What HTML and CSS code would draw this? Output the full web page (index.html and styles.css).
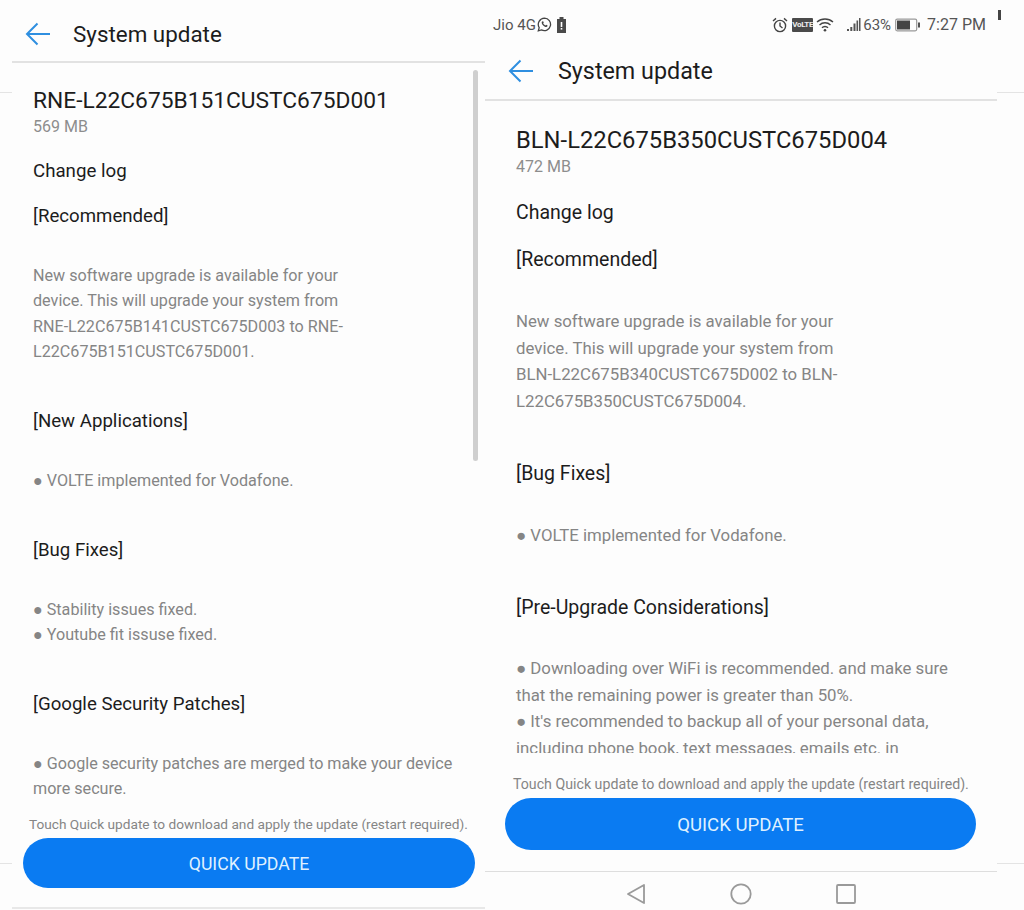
FILE: index.html
```html
<!DOCTYPE html>
<html lang="en">
<head>
<meta charset="utf-8">
<title>System update</title>
<link rel="stylesheet" href="styles.css">
</head>
<body>
<div class="page">
  <div class="gutter gutter-left"><div class="stub stub-a"></div><div class="stub stub-b"></div></div>

  <section class="phone phone-a">
    <header class="appbar">
      <svg class="back" width="26" height="24" viewBox="0 0 26 24"><path d="M25 12H2M12.5 1.5 2 12l10.500 10.500" fill="none" stroke="#2f8fe0" stroke-width="2"/></svg>
      <h1 class="apptitle">System update</h1>
    </header>
    <div class="body">
      <div class="scrollbar"></div>
      <h2 class="version">RNE-L22C675B151CUSTC675D001</h2>
      <div class="size">569 MB</div>
      <div class="changelog">Change log</div>
      <h3 class="head head-rec">[Recommended]</h3>
      <p class="text text-intro">New software upgrade is available for your<br>device. This will upgrade your system from<br>RNE-L22C675B141CUSTC675D003 to RNE-<br>L22C675B151CUSTC675D001.</p>
      <h3 class="head head-next">[New Applications]</h3>
      <p class="text text-gap">● VOLTE implemented for Vodafone.</p>
      <h3 class="head head-next">[Bug Fixes]</h3>
      <p class="text text-gap">● Stability issues fixed.<br>● Youtube fit issuse fixed.</p>
      <h3 class="head head-next">[Google Security Patches]</h3>
      <p class="text text-gap">● Google security patches are merged to make your device<br>more secure.</p>
    </div>
    <div class="footer">
      <p class="hint">Touch Quick update to download and apply the update (restart required).</p>
      <button class="cta">QUICK UPDATE</button>
    </div>
    <div class="endrule"></div>
  </section>

  <section class="phone phone-b">
    <div class="status">
      <span class="st-text">Jio 4G</span>
      <svg class="ic-wa" width="15" height="15" viewBox="0 0 15 15"><path d="M7.500 1.200a6.200 6.200 0 0 0-5.300 9.400L1.300 13.800l3.200-.9A6.200 6.200 0 1 0 7.500 1.200Z" fill="none" stroke="#444" stroke-width="1.300"/><path d="M5 4.500c-.8 1 0 3 1.500 4.200 1.400 1.300 3 1.800 3.800.9l.3-1-1.500-.8-.7.700c-1-.4-1.800-1.200-2.200-2.200l.6-.7-.7-1.400Z" fill="#444"/></svg>
      <svg class="ic-batt" width="11" height="16" viewBox="0 0 11 16"><path d="M3.500 0h4v2h2.500v14H1V2h2.500Z" fill="#4a4a4a"/><rect x="4.700" y="5" width="1.600" height="5" fill="#fff"/><rect x="4.700" y="11" width="1.600" height="1.600" fill="#fff"/></svg>
      <div class="st-right">
        <svg class="ic-alarm" width="16" height="16" viewBox="0 0 16 16"><circle cx="8" cy="9" r="5.600" fill="none" stroke="#444" stroke-width="1.400"/><path d="M8 5.500V9l2.500 2M1 4l3-2.600M15 4l-3-2.600" fill="none" stroke="#444" stroke-width="1.400"/></svg>
        <span class="volte">VoLTE</span>
        <svg class="ic-wifi" width="18" height="15" viewBox="0 0 18 15"><path d="M1 5a12 12 0 0 1 16 0M3.500 8a8 8 0 0 1 11 0M6 10.800a4 4 0 0 1 6 0" fill="none" stroke="#444" stroke-width="1.400"/><circle cx="9" cy="13.300" r="1.300" fill="#444"/></svg>
        <svg class="ic-signal" width="15" height="15" viewBox="0 0 15 15"><path d="M1 12h2v2H1ZM4.300 10h2v4h-2ZM7.500 6.500h2V14h-2ZM10.500 3.500h1.600V14h-1.600ZM13 1h1.500v13H13Z" fill="#555"/></svg>
        <span class="st-text st-pct">63%</span>
        <svg class="ic-level" width="25" height="14" viewBox="0 0 25 14"><rect x=".7" y="1.200" width="21" height="11.600" rx="1.500" fill="#fff" stroke="#999" stroke-width="1.200"/><rect x="2" y="2.500" width="13" height="9" fill="#444"/><rect x="23" y="4.500" width="2" height="5" fill="#555"/></svg>
        <span class="st-text st-time">7:27 PM</span>
      </div>
    </div>
    <header class="appbar appbar-b">
      <svg class="back" width="26" height="24" viewBox="0 0 26 24"><path d="M25 12H2M12.5 1.500 2 12l10.500 10.500" fill="none" stroke="#2f8fe0" stroke-width="2"/></svg>
      <h1 class="apptitle">System update</h1>
    </header>
    <div class="body body-b">
      <h2 class="version">BLN-L22C675B350CUSTC675D004</h2>
      <div class="size">472 MB</div>
      <div class="changelog">Change log</div>
      <h3 class="head head-rec">[Recommended]</h3>
      <p class="text text-intro">New software upgrade is available for your<br>device. This will upgrade your system from<br>BLN-L22C675B340CUSTC675D002 to BLN-<br>L22C675B350CUSTC675D004.</p>
      <h3 class="head head-next">[Bug Fixes]</h3>
      <p class="text text-gap">● VOLTE implemented for Vodafone.</p>
      <h3 class="head head-next">[Pre-Upgrade Considerations]</h3>
      <p class="text text-gap">● Downloading over WiFi is recommended. and make sure<br>that the remaining power is greater than 50%.<br>● It's recommended to backup all of your personal data,<br>including phone book, text messages, emails etc. in</p>
    </div>
    <div class="footer footer-b">
      <p class="hint">Touch Quick update to download and apply the update (restart required).</p>
      <button class="cta">QUICK UPDATE</button>
    </div>
    <nav class="navbar">
      <svg width="20" height="22" viewBox="0 0 20 22"><path d="M18 2 2 11l16 9Z" fill="none" stroke="#9a9a9a" stroke-width="1.800" stroke-linejoin="round"/></svg>
      <svg width="22" height="22" viewBox="0 0 22 22"><circle cx="11" cy="11" r="9.700" fill="none" stroke="#9a9a9a" stroke-width="1.800"/></svg>
      <svg width="20" height="20" viewBox="0 0 20 20"><rect x="1" y="1" width="18" height="18" rx="1" fill="none" stroke="#9a9a9a" stroke-width="1.800"/></svg>
    </nav>
  </section>

  <div class="gutter gutter-right"><div class="tick"></div><div class="stub stub-c"></div><div class="stub stub-b"></div></div>
</div>
</body>
</html>
```
FILE: styles.css
```css
* { box-sizing: border-box; }
html, body { margin: 0; padding: 0; }
body {
  width: 1024px;
  height: 910px;
  overflow: hidden;
  background: #fdfdfd;
  font-family: Roboto, "Liberation Sans", sans-serif;
  color: #1c1c1c;
}
.page { display: grid; grid-template-columns: 12px 473px 512px 27px; height: 910px; }
.gutter { display: flex; flex-direction: column; }
.stub { height: 1px; background: #e4e4e4; }
.stub-a { margin-top: 92px; }
.stub-b { margin-top: 770px; }
.gutter-right .stub-c { margin-top: 72px; }
.tick { width: 3px; height: 10px; margin: 10px 0 0 1px; background: #444; }

.phone { display: flex; flex-direction: column; height: 910px; }

.appbar {
  display: flex; align-items: center;
  height: 63px; padding: 8px 0 1px 13px;
  border-bottom: 2px solid #e2e2e2;
}
.apptitle { margin: 0 0 0 22px; font-size: 22.400px; font-weight: 400; line-height: 30px; }
.appbar-b { height: 58px; padding: 2px 0 2px 23px; }
.appbar-b .apptitle { margin-left: 24px; font-size: 23.300px; }

.body { position: relative; height: 751px; padding: 24px 0 0 21px; overflow: hidden; }
.body-b { height: 652px; padding: 25px 0 0 31px; }
.scrollbar { position: absolute; left: 461px; top: 7px; width: 5px; height: 391px; background: #cfcfcf; border-radius: 3px; }

.version { margin: 0; font-size: 22.750px; font-weight: 400; line-height: 28px; }
.size { font-size: 16px; line-height: 20px; color: #8d8d8d; margin-top: 2px; }
.changelog { font-size: 18.700px; line-height: 24px; margin-top: 22px; }
.head { margin: 0; font-size: 18.650px; font-weight: 400; line-height: 24px; }
.head-rec { margin-top: 21px; }
.head-next { margin-top: 44.800px; }
.text { margin: 0; font-size: 16.150px; line-height: 25.500px; color: #858585; }
.text-intro { margin-top: 34.500px; }
.text-gap { margin-top: 34.500px; }

.phone-b .version { font-size: 23.770px; }
.phone-b .size { margin-top: 3px; }
.phone-b .changelog { margin-top: 24px; font-size: 19.500px; }
.phone-b .head { font-size: 19.500px; }
.phone-b .head-rec { margin-top: 23px; }
.phone-b .text { font-size: 16.800px; line-height: 26.600px; }
.phone-b .text-intro { margin-top: 36px; }
.phone-b .text-gap { margin-top: 36.500px; }
.phone-b .head-next { margin-top: 47.500px; }
.phone-b .text-gap:last-child { margin-top: 34.500px; }

.footer { padding-left: 11px; }
.hint { margin: 0 0 0 6px; font-size: 13.670px; line-height: 20px; color: #858585; white-space: nowrap; }
.cta {
  display: block; width: 452px; height: 50px; margin-top: 4px; padding: 1px 0 0;
  border: 0; border-radius: 25px; background: #0a7bf2; color: #dff0ff;
  font: 400 17.700px Roboto, sans-serif;
}
.footer-b { padding: 21px 0 0 20px; }
.footer-b .hint { margin-left: 8px; font-size: 14.200px; }
.footer-b .cta { width: 471px; height: 52px; border-radius: 26px; margin-top: 4px; font-size: 18.600px; }

.endrule { height: 2px; margin-top: 19px; background: #e8e8e8; }

.status { display: flex; align-items: center; height: 43px; padding: 6px 11px 0 8px; color: #555; }
.st-text { font-size: 15px; line-height: 20px; white-space: nowrap; }
.ic-wa { margin-left: 1px; }
.ic-batt { margin-left: 4px; }
.st-right { display: flex; align-items: center; margin-left: auto; }
.volte {
  display: block; width: 21px; height: 14px; margin-left: 4px; background: #4a4a4a; color: #eee;
  font-size: 8px; font-weight: 700; line-height: 14px; text-align: center; letter-spacing: -.3px; border-radius: 1px;
}
.ic-wifi { margin-left: 3px; }
.ic-signal { margin-left: 12px; }
.st-pct { margin-left: 2px; }
.ic-level { margin-left: 4px; }
.st-time { margin-left: 7px; font-size: 16px; }

.navbar {
  display: flex; align-items: center; justify-content: center; gap: 84px;
  height: 39px; margin-top: 21px; padding-top: 6px; border-top: 1px solid #dedede;
}
```
